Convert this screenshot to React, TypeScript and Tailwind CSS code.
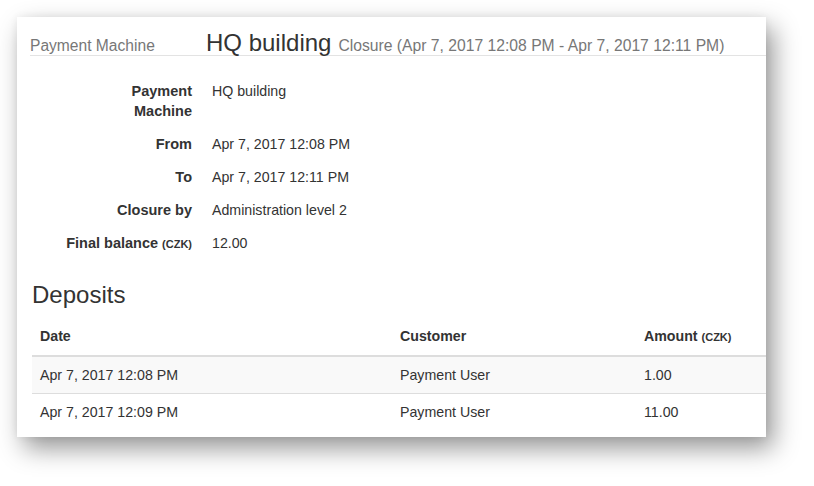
import React from "react";

const rows = [
  { label: <>Payment<br />Machine</>, value: "HQ building" },
  { label: "From", value: "Apr 7, 2017 12:08 PM" },
  { label: "To", value: "Apr 7, 2017 12:11 PM" },
  { label: "Closure by", value: "Administration level 2" },
  {
    label: (
      <>
        Final balance <span className="text-[11px]">(CZK)</span>
      </>
    ),
    value: "12.00",
  },
];

const deposits = [
  { date: "Apr 7, 2017 12:08 PM", customer: "Payment User", amount: "1.00" },
  { date: "Apr 7, 2017 12:09 PM", customer: "Payment User", amount: "11.00" },
];

export default function App() {
  return (
    <div
      className="w-[814px] h-[486px] bg-white overflow-hidden pt-[17px] pl-[17px] text-[#333]"
      style={{ fontFamily: '"Liberation Sans", Arial, sans-serif' }}
    >
      <div className="w-[749px] h-[420px] bg-white shadow-[7px_11px_24px_rgba(0,0,0,0.42),0_0_8px_rgba(0,0,0,0.06)] overflow-hidden">
        {/* Header */}
        <div className="ml-[13px] pt-[14px] flex items-baseline border-b border-[#e3e3e3] leading-[24px] h-[39px]">
          <div className="w-[176px] text-[15.6px] text-[#777]">Payment Machine</div>
          <div className="text-[24px] text-[#333]">HQ building</div>
          <div className="ml-[7px] text-[15.7px] text-[#777]">
            Closure (Apr 7, 2017 12:08 PM - Apr 7, 2017 12:11 PM)
          </div>
        </div>

        {/* Details */}
        <div className="ml-[15px] mt-[25px] flex flex-col gap-[13px] text-[14px] leading-[20px]">
          {rows.map((r, i) => (
            <div key={i} className="flex">
              <div className="w-[160px] text-right font-bold text-[14.5px]">{r.label}</div>
              <div className="ml-[20px] text-[14.2px]">{r.value}</div>
            </div>
          ))}
        </div>

        {/* Deposits */}
        <h3 className="ml-[15px] mt-[28px] text-[24px] leading-[26px]">Deposits</h3>

        <div className="ml-[15px] mt-[10px] text-[14.2px] leading-[20px]">
          <div className="flex font-bold border-b-2 border-[#ddd]">
            <div className="w-[360px] px-[8px] py-[8px]">Date</div>
            <div className="w-[244px] px-[8px] py-[8px]">Customer</div>
            <div className="flex-1 px-[8px] py-[8px]">
              Amount <span className="text-[11px]">(CZK)</span>
            </div>
          </div>
          {deposits.map((d, i) => (
            <div
              key={i}
              className={
                i === 0
                  ? "flex bg-[#f9f9f9]"
                  : "flex border-t border-[#ddd]"
              }
            >
              <div className="w-[360px] px-[8px] py-[8px]">{d.date}</div>
              <div className="w-[244px] px-[8px] py-[8px]">{d.customer}</div>
              <div className="flex-1 px-[8px] py-[8px]">{d.amount}</div>
            </div>
          ))}
        </div>
      </div>
    </div>
  );
}
